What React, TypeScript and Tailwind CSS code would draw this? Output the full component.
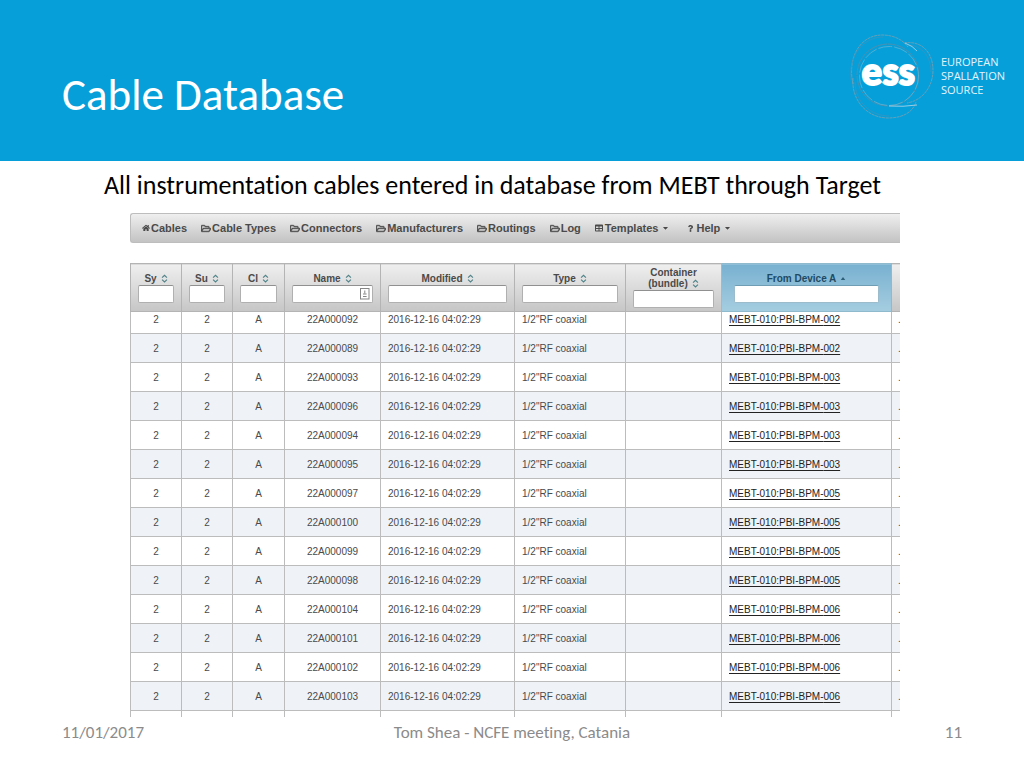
import { FaHome, FaRegFolderOpen, FaTable, FaCaretDown, FaQuestion } from "react-icons/fa";
import type { ReactNode } from "react";

type MenuItem = { label: string; icon: ReactNode; menu?: boolean };

const folder = <FaRegFolderOpen className="h-[9px] w-[10px] stroke-current [stroke-width:28]" />;

const menuItems: MenuItem[] = [
  { label: "Cables", icon: <FaHome className="h-2 w-2" /> },
  { label: "Cable Types", icon: folder },
  { label: "Connectors", icon: folder },
  { label: "Manufacturers", icon: folder },
  { label: "Routings", icon: folder },
  { label: "Log", icon: folder },
  { label: "Templates", icon: <FaTable className="mr-px h-2 w-2" />, menu: true },
  { label: "Help", icon: <FaQuestion className="mr-px h-[7px] w-[7px]" />, menu: true },
];

const rows: [string, string][] = [
  ["22A000092", "002"],
  ["22A000089", "002"],
  ["22A000093", "003"],
  ["22A000096", "003"],
  ["22A000094", "003"],
  ["22A000095", "003"],
  ["22A000097", "005"],
  ["22A000100", "005"],
  ["22A000099", "005"],
  ["22A000098", "005"],
  ["22A000104", "006"],
  ["22A000101", "006"],
  ["22A000102", "006"],
  ["22A000103", "006"],
];

function SortIcon() {
  return (
    <svg viewBox="0 0 8 10" className="ml-1 inline-block h-[9px] w-[7px] align-[-1px]" fill="none" stroke="#4f8388" strokeWidth="1.3" aria-hidden="true">
      <path d="M1.2 4 4 1.3 6.8 4M1.2 6.2 4 8.9 6.8 6.2" />
    </svg>
  );
}

function EssLogo() {
  return (
    <div className="flex items-center gap-1">
      <svg viewBox="0 0 92 92" className="h-[92px] w-[92px]" role="img" aria-label="ess">
        <g fill="none" stroke="#6f9fb4" strokeWidth="0.9" strokeDasharray="3 0.6">
          <path d="M8 54C2 28 15 5 37 5C48 5 57 9 63 17" />
          <path d="M59 13C78 10 88 24 88 40C88 58 76 71 62 73" />
          <path d="M8 48C6 70 22 88 43 88C58 88 68 82 71 72" />
        </g>
        <g fill="none" stroke="#3f93bb" strokeWidth="0.7">
          <path d="M6 50C3 28 17 7 38 7" />
          <path d="M62 15C78 15 86 28 86 42" />
          <path d="M10 52C10 72 26 86 44 86" />
        </g>
        <circle cx="43" cy="45" r="31" fill="none" stroke="#4f8fae" strokeWidth="1" strokeDasharray="9 0.7" />
        <circle cx="44" cy="46" r="29.500" fill="none" stroke="#6fb4d0" strokeWidth="0.7" strokeDasharray="14 2" />
        <path d="M44 76Q58 77 72 75M60 13Q68 16 72 21" fill="none" stroke="#a5d3e6" strokeWidth="0.9" />
        <text x="16.500" y="55" fill="#fff" stroke="#fff" strokeWidth="2" fontFamily="Carlito, Calibri, Lato, sans-serif" fontWeight="700" fontSize="41">
          ess
        </text>
      </svg>
      <p className="font-['Open_Sans',sans-serif] text-[11px] leading-[14px] text-[#e4f4fb]">
        EUROPEAN
        <br />
        SPALLATION
        <br />
        SOURCE
      </p>
    </div>
  );
}

function FilterHead({ label, children }: { label: string; children?: ReactNode }) {
  return (
    <th className="border border-[#b4b4b4] bg-linear-to-b from-[#efefef] to-[#c6c6c6] px-[7px] py-0 align-middle font-bold">
      <label className="block">
        <span className="block leading-[11px]">
          {children ?? label}
          <SortIcon />
        </span>
        <span className="mt-px flex h-[18px] items-center rounded-[2px] border border-[#b0b0b0] border-t-[#909090] bg-white">
          <input type="text" className="h-full w-full min-w-0 bg-transparent px-1 outline-none" />
          {label === "Name" && (
            <svg viewBox="0 0 10 12" className="mr-[2px] h-3 w-[10px] shrink-0" fill="none" stroke="#858585" aria-hidden="true">
              <rect x="0.5" y="0.5" width="8.500" height="10.500" />
              <path d="M4.800 2.500v3M3 6h3.600M3 8.500h3.600" />
            </svg>
          )}
        </span>
      </label>
    </th>
  );
}

export default function App() {
  const cell = "border border-[#bcbcbc] py-0 pb-[7px] align-bottom leading-3";
  return (
    <div className="min-h-screen bg-white font-['Carlito','Calibri','Lato',sans-serif]">
      <header className="flex h-[161px] items-start justify-between bg-[#069fd9] pl-[62px] pr-[19px] pt-[30px]">
        <h1 className="pt-[38px] text-[45px] leading-[54px] text-white [font-variant-ligatures:none]">Cable Database</h1>
        <EssLogo />
      </header>

      <main>
        <p className="pl-[104px] pt-2 text-[26px] leading-8 text-black [font-variant-ligatures:none]">
          All instrumentation cables entered in database from MEBT through Target
        </p>

        <div className="ml-[130px] mr-[124px] mt-3 font-['Liberation_Sans',Arial,sans-serif] text-[#4a4a4a]">
          <nav className="flex h-[30px] items-center gap-[14px] overflow-hidden whitespace-nowrap rounded-l-[3px] border border-r-0 border-[#bdbdbd] bg-linear-to-b from-[#efefef] to-[#c3c3c3] pl-[11px] text-[11px] font-bold">
            {menuItems.map((item) => (
              <a key={item.label} href="#" className={item.menu ? "mr-1 flex items-center gap-px" : "flex items-center gap-px"}>
                {item.icon}
                {item.label}
                {item.menu && <FaCaretDown className="ml-[3px] h-2 w-[7px]" />}
              </a>
            ))}
          </nav>

          <div className="mt-5 h-[454px] overflow-hidden">
            <table className="w-full table-fixed border-collapse text-[10px]">
              <colgroup>
                <col className="w-[51px]" />
                <col className="w-[51px]" />
                <col className="w-[52px]" />
                <col className="w-[96px]" />
                <col className="w-[134px]" />
                <col className="w-[111px]" />
                <col className="w-[96px]" />
                <col className="w-[170px]" />
                <col className="w-[9px]" />
              </colgroup>
              <thead>
                <tr className="h-12">
                  <FilterHead label="Sy" />
                  <FilterHead label="Su" />
                  <FilterHead label="Cl" />
                  <FilterHead label="Name" />
                  <FilterHead label="Modified" />
                  <FilterHead label="Type" />
                  <FilterHead label="Container (bundle)">
                    Container
                    <br />
                    (bundle)
                  </FilterHead>
                  <th className="border border-[#8fb9cc] bg-linear-to-b from-[#78b1d0] to-[#a5cde0] px-3 py-0 align-middle font-bold text-[#1f4a63]">
                    <label className="block">
                      <span className="flex items-center justify-center gap-1 leading-[11px]">
                        From Device A
                        <svg viewBox="0 0 6 4" className="h-[3px] w-[6px]" aria-hidden="true">
                          <path d="M0 4 3 0 6 4Z" fill="#2d5f78" />
                        </svg>
                      </span>
                      <input type="text" className="mt-px block h-[18px] w-full rounded-[2px] border border-[#9dbccb] border-t-[#6f9db4] bg-white px-1 outline-none" />
                    </label>
                  </th>
                  <th className="border border-r-0 border-[#b4b4b4] bg-linear-to-b from-[#efefef] to-[#c6c6c6] p-0" />
                </tr>
              </thead>
              <tbody>
                {rows.map(([name, device], i) => (
                  <tr key={name} className={i === 0 ? "h-[22px]" : "h-[29px] even:bg-[#eff3f8]"}>
                    <td className={`${cell} text-center`}>2</td>
                    <td className={`${cell} text-center`}>2</td>
                    <td className={`${cell} text-center`}>A</td>
                    <td className={`${cell} text-center`}>{name}</td>
                    <td className={`${cell} pl-[7px] whitespace-nowrap`}>2016-12-16 04:02:29</td>
                    <td className={`${cell} pl-[7px]`}>1/2"RF coaxial</td>
                    <td className={cell} />
                    <td className={`${cell} pl-[7px] whitespace-nowrap text-[#222]`}>
                      <a href="#" className="underline underline-offset-2">MEBT-010:PBI-BPM-{device}</a>
                    </td>
                    <td className={`${cell} border-r-0 pl-[6px]`}>.</td>
                  </tr>
                ))}
                <tr className="h-[29px]">
                  {Array.from({ length: 9 }, (_, i) => (
                    <td key={i} className="border border-[#bcbcbc] p-0 last:border-r-0" />
                  ))}
                </tr>
              </tbody>
            </table>
          </div>
        </div>
      </main>

      <footer className="grid grid-cols-3 px-[62px] pt-[6px] text-[17px] leading-5 text-[#8b8b8b] [font-variant-ligatures:none]">
        <span>11/01/2017</span>
        <span className="text-center whitespace-nowrap">Tom Shea - NCFE meeting, Catania</span>
        <span className="text-right">11</span>
      </footer>
    </div>
  );
}
